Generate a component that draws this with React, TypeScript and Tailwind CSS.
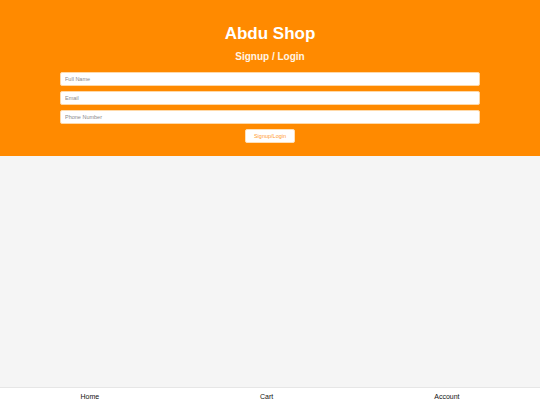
import React from 'react';

// Header form
// ---------------
const fields = ['Full Name', 'Email', 'Phone Number'];

const Header = () => (
  <header className="flex flex-col items-center bg-[#ff8a00] pt-[24px] pb-[13px]">
    <h1 className="text-[17px] leading-[20px] font-bold text-white">Abdu Shop</h1>
    <h2 className="mt-[6px] text-[10px] leading-[14px] font-bold text-[#fff5e6]">
      Signup / Login
    </h2>
    <form className="mt-[8px] flex w-[420px] flex-col items-center gap-[5px]">
      {fields.map(f => (
        <input
          key={f}
          type="text"
          placeholder={f}
          className="h-[14px] w-full rounded-[2px] border border-[#ffd9a8] bg-white px-[4px] text-[5.5px] text-[#555] outline-none placeholder:text-[#8a8a8a]"
        />
      ))}
      <button
        type="button"
        className="h-[14px] w-[50px] rounded-[2px] border border-[#ffe0b8] bg-white text-[5.5px] text-[#ff9a2e]"
      >
        Signup/Login
      </button>
    </form>
  </header>
);

// Footer nav
// ---------------
const Footer = () => (
  <nav className="flex h-[18px] items-center justify-around border-t border-[#e6e6e6] bg-white pt-[1px] text-[7px] text-[#111]">
    <span>Home</span>
    <span>Cart</span>
    <span>Account</span>
  </nav>
);

export default function App() {
  return (
    <div className="flex h-[405px] flex-col font-['Liberation_Sans',Arial,sans-serif]">
      <Header />
      <main className="flex-1 bg-[#f5f5f5]" />
      <Footer />
    </div>
  );
}
